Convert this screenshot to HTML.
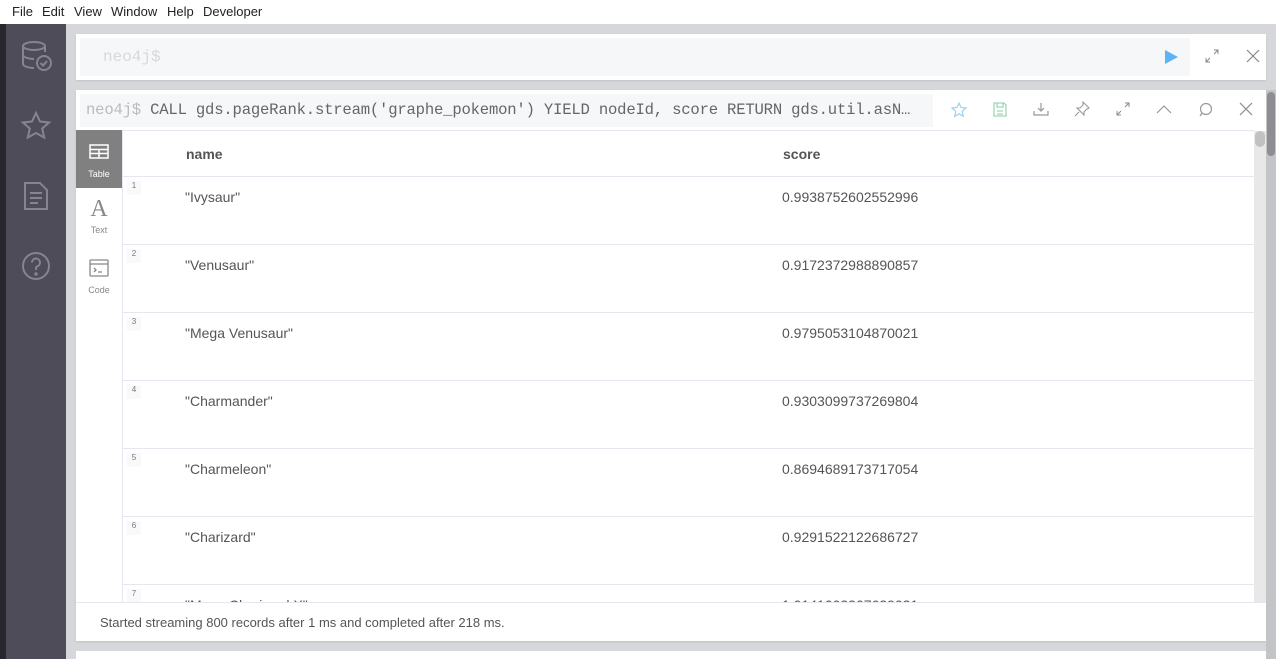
<!DOCTYPE html>
<html><head><meta charset="utf-8"><style>
*{box-sizing:border-box;margin:0;padding:0}
body{width:1276px;height:659px;overflow:hidden;background:#d5d7da;font-family:"Liberation Sans",sans-serif;position:relative}
.menu{position:absolute;left:0;top:0;width:1276px;height:24px;background:#fff;font-size:13px;color:#222}
.menu span{position:absolute;top:4px}
.strip{position:absolute;left:0;top:24px;width:6px;height:635px;background:#25272c}
.side{position:absolute;left:6px;top:24px;width:60px;height:635px;background:#4d4c58}
.card{position:absolute;background:#fff;box-shadow:0 1px 2px rgba(0,0,0,.1)}
.mono{font-family:"Liberation Mono",monospace;font-size:16px}
.row{position:absolute;left:122px;width:1132px;height:68px;border-top:1px solid #e6e6ee}
.row .n{position:absolute;left:5px;top:4px;width:14px;height:14px;background:#f9f9fa;font-size:8px;color:#777;text-align:center;line-height:10px}
.row .a{position:absolute;left:63px;top:12px;font-size:14px;color:#555}
.row .b{position:absolute;left:660px;top:12px;font-size:14px;color:#555}
</style></head><body>
<div class="menu"><span style="left:12px">File</span><span style="left:42px">Edit</span><span style="left:74px">View</span><span style="left:111px">Window</span><span style="left:167px">Help</span><span style="left:203px">Developer</span></div>
<div class="strip"></div>
<div class="side">
<svg style="position:absolute;left:14px;top:16px" width="34" height="34" viewBox="0 0 34 34" fill="none" stroke="#86858f" stroke-width="2"><ellipse cx="14" cy="6" rx="11" ry="4"/><path d="M3 6v18c0 2 5 4 11 4M3 15c0 2 5 4 11 4M25 6v6"/><circle cx="24" cy="23" r="7"/><path d="M20.5 23l2.5 2.5 4-4.5"/></svg>
<svg style="position:absolute;left:14px;top:86px" width="32" height="32" viewBox="0 0 32 32" fill="none" stroke="#86858f" stroke-width="2"><path d="M16 3l4 8.5 9 1-6.8 6 2 9L16 23l-8.2 4.5 2-9L3 12.5l9-1z"/></svg>
<svg style="position:absolute;left:16px;top:156px" width="28" height="32" viewBox="0 0 28 32" fill="none" stroke="#86858f" stroke-width="2"><path d="M3 3h15l7 7v19H3z"/><path d="M8 13h12M8 18h12M8 23h8"/></svg>
<svg style="position:absolute;left:14px;top:226px" width="32" height="32" viewBox="0 0 32 32" fill="none" stroke="#86858f" stroke-width="2"><circle cx="16" cy="16" r="13"/><path d="M12 12.5a4 4 0 1 1 5.5 3.7c-1 .5-1.5 1.3-1.5 2.3v1.5"/><circle cx="16" cy="24" r=".8" fill="#86858f"/></svg>
</div>
<div class="card" style="left:76px;top:34px;width:1190px;height:46px">
<div style="position:absolute;left:4px;top:4px;width:1110px;height:38px;background:#f6f7f9"></div>
<div class="mono" style="position:absolute;left:27px;top:14px;color:#d6d8db">neo4j$</div>
<svg style="position:absolute;left:1088px;top:15px" width="14" height="16"><path d="M1 1l13 7-13 7z" fill="#5db3f3"/></svg>
<svg style="position:absolute;left:1129px;top:15px" width="14" height="14" fill="none" stroke="#888" stroke-width="1"><path d="M1 13l4-4M13 1l-4 4M1 9v4h4M13 5V1H9"/></svg>
<svg style="position:absolute;left:1170px;top:15px" width="14" height="14" stroke="#888" stroke-width="1.2"><path d="M1 1l12 12M13 1L1 13"/></svg>
</div>
<div class="card" style="left:76px;top:90px;width:1190px;height:551px">
<div style="position:absolute;left:4px;top:4px;width:853px;height:33px;background:#f6f7f9"></div>
<div class="mono" style="position:absolute;left:10px;top:11px;color:#666;white-space:nowrap;font-size:15.6px;letter-spacing:-0.2px"><span style="color:#bbb">neo4j$</span> CALL gds.pageRank.stream('graphe_pokemon') YIELD nodeId, score RETURN gds.util.asN…</div>
<svg style="position:absolute;left:875px;top:12px" width="16" height="16" fill="none" stroke="#9cd0f3" stroke-width="1.2"><path d="M8 1l2 4.5 5 .5-3.8 3.3 1.1 5L8 11.8 3.7 14.3l1.1-5L1 6l5-.5z"/></svg>
<svg style="position:absolute;left:917px;top:12px" width="14" height="15" fill="none" stroke="#9fd5b6" stroke-width="1.3"><path d="M1 1h10l2 2v11H1z M4 1v4h6V1 M4 9h6M4 12h6"/></svg>
<svg style="position:absolute;left:957px;top:12px" width="16" height="14" fill="none" stroke="#999" stroke-width="1.2"><path d="M8 1v8M5 6l3 3 3-3M1 9v4h14V9"/></svg>
<svg style="position:absolute;left:998px;top:11px" width="16" height="16" fill="none" stroke="#999" stroke-width="1.1"><path d="M9 1l6 6-2 1-3 3 0 3-7-7 3 0 3-3zM5 11l-4 4"/></svg>
<svg style="position:absolute;left:1040px;top:12px" width="14" height="14" fill="none" stroke="#888" stroke-width="1"><path d="M1 13l4-4M13 1l-4 4M1 9v4h4M13 5V1H9"/></svg>
<svg style="position:absolute;left:1080px;top:14px" width="16" height="10" fill="none" stroke="#999" stroke-width="1.2"><path d="M1 9l7-7 7 7"/></svg>
<svg style="position:absolute;left:1122px;top:12px" width="15" height="15" fill="none" stroke="#999" stroke-width="1.2"><circle cx="8" cy="7" r="5.5"/><path d="M4 11l-2 3"/></svg>
<svg style="position:absolute;left:1163px;top:12px" width="14" height="14" stroke="#888" stroke-width="1.2"><path d="M1 1l12 12M13 1L1 13"/></svg>
<div style="position:absolute;left:0;top:40px;width:46px;height:58px;background:#808080"></div>
<svg style="position:absolute;left:13px;top:54px" width="20" height="15" fill="none" stroke="#fff" stroke-width="1.5"><rect x="1" y="1" width="18" height="13"/><path d="M1 5.5h18M1 9.5h18M10 5.5v8.5"/></svg>
<div style="position:absolute;left:0;top:79px;width:46px;text-align:center;font-size:9px;color:#fff">Table</div>
<div style="position:absolute;left:0;top:106px;width:46px;text-align:center;font-family:'Liberation Serif',serif;font-size:24px;color:#888">A</div>
<div style="position:absolute;left:0;top:135px;width:46px;text-align:center;font-size:9px;color:#888">Text</div>
<svg style="position:absolute;left:13px;top:169px" width="20" height="18" fill="none" stroke="#888" stroke-width="1.3"><rect x="1" y="1" width="18" height="16" rx="1"/><path d="M1 5h18M5 9l2 2-2 2M9 13h4"/></svg>
<div style="position:absolute;left:0;top:195px;width:46px;text-align:center;font-size:9px;color:#888">Code</div>
<div style="position:absolute;left:46px;top:40px;width:1132px;height:472px;overflow:hidden;border-left:1px solid #e6e6ee;border-top:1px solid #e6e6ee;background:#fff">
<div style="position:absolute;left:63px;top:15px;font-size:14px;font-weight:bold;color:#555">name</div>
<div style="position:absolute;left:660px;top:15px;font-size:14px;font-weight:bold;color:#555">score</div>
</div>
</div>
<div style="position:absolute;left:0;top:0">
<div class="row" style="top:176px"><div class="n">1</div><div class="a">"Ivysaur"</div><div class="b">0.9938752602552996</div></div>
<div class="row" style="top:244px"><div class="n">2</div><div class="a">"Venusaur"</div><div class="b">0.9172372988890857</div></div>
<div class="row" style="top:312px"><div class="n">3</div><div class="a">"Mega Venusaur"</div><div class="b">0.9795053104870021</div></div>
<div class="row" style="top:380px"><div class="n">4</div><div class="a">"Charmander"</div><div class="b">0.9303099737269804</div></div>
<div class="row" style="top:448px"><div class="n">5</div><div class="a">"Charmeleon"</div><div class="b">0.8694689173717054</div></div>
<div class="row" style="top:516px"><div class="n">6</div><div class="a">"Charizard"</div><div class="b">0.9291522122686727</div></div>
<div class="row" style="top:584px;height:18px;overflow:hidden"><div class="n">7</div><div class="a">"Mega Charizard X"</div><div class="b">1.0141003307639021</div></div>
</div>
<div style="position:absolute;left:1254px;top:131px;width:12px;height:471px;background:#e8e8e8"><div style="position:absolute;left:1px;top:0;width:10px;height:16px;border-radius:5px;background:#c1c1c1"></div></div>
<div style="position:absolute;left:76px;top:602px;width:1190px;height:39px;background:#fff;border-top:1px solid #e6e6ee"></div>
<div style="position:absolute;left:100px;top:615px;font-size:13px;color:#555">Started streaming 800 records after 1 ms and completed after 218 ms.</div>
<div style="position:absolute;left:1266px;top:90px;width:10px;height:569px;background:#c3c4c8"><div style="position:absolute;left:1px;top:2px;width:8px;height:64px;border-radius:4px;background:#8e8e92"></div></div>
<div style="position:absolute;left:76px;top:651px;width:1190px;height:8px;background:#fff"></div>
</body></html>
